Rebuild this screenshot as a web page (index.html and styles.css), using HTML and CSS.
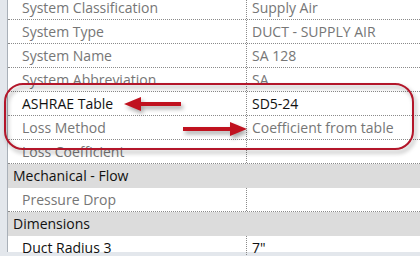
FILE: index.html
```html
<!DOCTYPE html>
<html lang="en">
<head>
    <meta charset="UTF-8">
    <title>Properties</title>
    <link rel="stylesheet" href="styles.css">
</head>
<body>
    <div class="panel">
        <div class="props">
            <div class="row first"><div class="name">System Classification</div><div class="value">Supply Air</div></div>
            <div class="row"><div class="name">System Type</div><div class="value">DUCT - SUPPLY AIR</div></div>
            <div class="row"><div class="name">System Name</div><div class="value">SA 128</div></div>
            <div class="row"><div class="name">System Abbreviation</div><div class="value">SA</div></div>
            <div class="row active"><div class="name">ASHRAE Table</div><div class="value">SD5-24</div></div>
            <div class="row"><div class="name">Loss Method</div><div class="value">Coefficient from table</div></div>
            <div class="row"><div class="name">Loss Coefficient</div><div class="value"></div></div>
            <div class="group">Mechanical - Flow</div>
            <div class="row"><div class="name">Pressure Drop</div><div class="value"></div></div>
            <div class="group">Dimensions</div>
            <div class="row active"><div class="name">Duct Radius 3</div><div class="value">7"</div></div>
        </div>

        <!-- callout drawn over the grid -->
        <svg class="callout" width="420" height="256" viewBox="0 0 420 256">
            <rect x="5" y="84" width="408" height="65" rx="18" ry="18" fill="none" stroke="#b3162a" stroke-width="2"/>
            <rect x="140" y="102" width="41" height="4" fill="#c0121f"/>
            <polygon points="124,104 141,97 141,111" fill="#c0121f"/>
            <rect x="183" y="127" width="48" height="4" fill="#c0121f"/>
            <polygon points="247,129 230,122 230,136" fill="#c0121f"/>
        </svg>
    </div>
</body>
</html>
```

FILE: styles.css
```css
body {
    margin: 0;
    padding: 0;
    background-color: white;
    font-family: "Open Sans", "Noto Sans", sans-serif;
    font-size: 14px;
    overflow: hidden;
}

.panel {
    position: relative;
    width: 420px;
    height: 256px;
    overflow: hidden;
    background-color: #e3e7ec;
}

.props {
    margin-left: 7px;
    border-left: 1px solid #a9b0b8;
    background-color: white;
    height: 100%;
}

.row {
    display: flex;
    height: 23px;
    border-bottom: 1px dotted #8a8a8a;
    color: #767676;
}

.row.first {
    margin-top: -4px;
}

.row.active {
    color: #111;
}

.name {
    width: 224px;
    padding-left: 14px;
    border-right: 1px dotted #8a8a8a;
    line-height: 23px;
    white-space: nowrap;
}

.value {
    flex: 1;
    padding-left: 5px;
    line-height: 23px;
    white-space: nowrap;
}

.group {
    height: 23px;
    line-height: 23px;
    padding-left: 5px;
    background-color: #dcdcdc;
    border-bottom: 1px solid #dcdcdc;
    color: #111;
}

.callout {
    position: absolute;
    left: 0;
    top: 0;
    filter: drop-shadow(2px 3px 2px rgba(0, 0, 0, 0.35));
}
```
